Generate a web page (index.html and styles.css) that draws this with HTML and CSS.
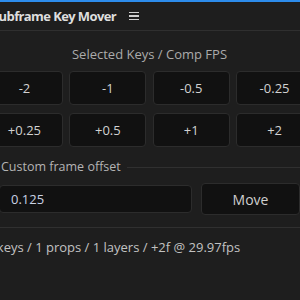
FILE: index.html
```html
<!DOCTYPE html>
<html lang="en">
<head>
    <meta charset="UTF-8">
    <meta name="viewport" content="width=device-width, initial-scale=1.0">
    <title>Subframe Key Mover</title>
    <link rel="stylesheet" href="styles.css">
</head>
<body>
    <div class="panel">
        <header class="panel-header">
            <h1>Subframe Key Mover</h1>
            <span class="menu-icon"><span></span><span></span><span></span></span>
        </header>

        <div class="section-title">Selected Keys / Comp FPS</div>

        <!-- Quick offset buttons -->
        <div class="offset-grid">
            <button class="btn">-2</button>
            <button class="btn">-1</button>
            <button class="btn">-0.5</button>
            <button class="btn">-0.25</button>
            <button class="btn">+0.25</button>
            <button class="btn">+0.5</button>
            <button class="btn">+1</button>
            <button class="btn">+2</button>
        </div>

        <!-- Custom offset -->
        <fieldset class="custom-offset">
            <legend>Custom frame offset</legend>
            <div class="custom-row">
                <input type="text" class="offset-input" value="0.125">
                <button class="btn btn-move">Move</button>
            </div>
        </fieldset>

        <div class="status">1 keys / 1 props / 1 layers / +2f @ 29.97fps</div>
    </div>
</body>
</html>
```

FILE: styles.css
```css
* {
    margin: 0;
    padding: 0;
    box-sizing: border-box;
}

html, body {
    width: 300px;
    height: 300px;
    overflow: hidden;
}

body {
    font-family: 'Open Sans', 'Noto Sans', sans-serif;
    background: #1e1e1e;
    color: #c8c8c8;
    border-top: 2px solid #2d8ceb;
}

.panel {
    width: 339px;
    margin-left: -20px;
    padding: 0 6px;
}

.panel-header {
    display: flex;
    align-items: center;
    gap: 13px;
    height: 29px;
    padding-left: 12px;
    margin: 0 -6px;
    border-bottom: 1px solid #2f2f2f;
}

.panel-header h1 {
    font-size: 13px;
    font-weight: 700;
    letter-spacing: -0.6px;
    color: #dedede;
}

.menu-icon {
    display: flex;
    flex-direction: column;
    gap: 2px;
    width: 10px;
}

.menu-icon span {
    display: block;
    height: 1.5px;
    background: #cfcfcf;
}

.section-title {
    margin-top: 14px;
    line-height: 18px;
    font-size: 13px;
    text-align: center;
    color: #ababab;
}

.offset-grid {
    display: grid;
    grid-template-columns: repeat(4, 1fr);
    gap: 8px 6.5px;
    margin-top: 8px;
}

.btn {
    height: 34px;
    background: #111;
    border: 1px solid #2c2c2c;
    border-radius: 4px;
    color: #d2d2d2;
    font-family: inherit;
    font-size: 13px;
}

.custom-offset {
    margin-top: 11px;
    padding: 7px 12px 12px;
    border: 1px solid #303030;
    border-radius: 4px;
}

.custom-offset legend {
    padding: 0 6px 0 5px;
    margin-left: -3px;
    line-height: 18px;
    font-size: 12.5px;
    color: #b4b4b4;
}

.custom-row {
    display: flex;
    align-items: center;
    gap: 9px;
}

.offset-input {
    flex: 1;
    height: 28px;
    padding-left: 11px;
    background: #111;
    border: 1px solid #2c2c2c;
    border-radius: 4px;
    color: #c9d2e4;
    font-family: inherit;
    font-size: 13px;
}

.btn-move {
    width: 99px;
    height: 32px;
    font-size: 14px;
    color: #cfcfcf;
}

.status {
    margin-top: 10px;
    line-height: 18px;
    font-size: 13px;
    color: #c2c2c2;
}
```
